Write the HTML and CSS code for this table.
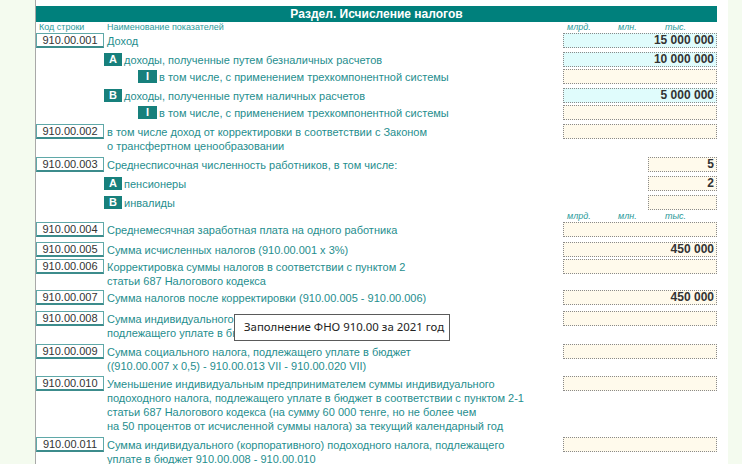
FILE: index.html
```html
<!DOCTYPE html>
<html lang="ru">
<head>
<meta charset="utf-8">
<title>Раздел. Исчисление налогов</title>
<link rel="stylesheet" href="styles.css">
</head>
<body>
<div class="page">
  <div class="title">Раздел. Исчисление налогов</div>
  <div class="colhead">
    <div class="ch-code">Код строки</div>
    <div class="ch-name">Наименование показателей</div>
    <div class="units"><span class="u1">млрд.</span><span class="u2">млн.</span><span>тыс.</span></div>
  </div>

  <div class="row first">
    <div class="code">910.00.001</div>
    <div class="label">Доход</div>
    <div class="field calc">15 000 000</div>
  </div>
  <div class="row">
    <div></div>
    <div class="label b"><span class="badge">A</span><span>доходы, полученные путем безналичных расчетов</span></div>
    <div class="field calc">10 000 000</div>
  </div>
  <div class="row sub">
    <div></div>
    <div class="label b"><span class="badge ind">I</span><span>в том числе, с применением трехкомпонентной системы</span></div>
    <div class="field"></div>
  </div>
  <div class="row">
    <div></div>
    <div class="label b"><span class="badge">B</span><span>доходы, полученные путем наличных расчетов</span></div>
    <div class="field calc">5 000 000</div>
  </div>
  <div class="row sub">
    <div></div>
    <div class="label b"><span class="badge ind">I</span><span>в том числе, с применением трехкомпонентной системы</span></div>
    <div class="field"></div>
  </div>
  <div class="row">
    <div class="code">910.00.002</div>
    <div class="label">в том числе доход от корректировки в соответствии с Законом<br>о трансфертном ценообразовании</div>
    <div class="field"></div>
  </div>
  <div class="row">
    <div class="code">910.00.003</div>
    <div class="label">Среднесписочная численность работников, в том числе:</div>
    <div class="field sm">5</div>
  </div>
  <div class="row">
    <div></div>
    <div class="label b"><span class="badge">A</span><span>пенсионеры</span></div>
    <div class="field sm">2</div>
  </div>
  <div class="row">
    <div></div>
    <div class="label b"><span class="badge">B</span><span>инвалиды</span></div>
    <div class="field sm"></div>
  </div>
  <div class="unitrow">
    <div></div>
    <div></div>
    <div class="units"><span class="u1">млрд.</span><span class="u2">млн.</span><span>тыс.</span></div>
  </div>
  <div class="row after-units">
    <div class="code">910.00.004</div>
    <div class="label">Среднемесячная заработная плата на одного работника</div>
    <div class="field"></div>
  </div>
  <div class="row loose">
    <div class="code">910.00.005</div>
    <div class="label">Сумма исчисленных налогов (910.00.001 x 3%)</div>
    <div class="field">450 000</div>
  </div>
  <div class="row tight">
    <div class="code">910.00.006</div>
    <div class="label">Корректировка суммы налогов в соответствии с пунктом 2<br>статьи 687 Налогового кодекса</div>
    <div class="field"></div>
  </div>
  <div class="row tight">
    <div class="code">910.00.007</div>
    <div class="label">Сумма налогов после корректировки (910.00.005 - 910.00.006)</div>
    <div class="field">450 000</div>
  </div>
  <div class="row wide">
    <div class="code">910.00.008</div>
    <div class="label">Сумма индивидуального (корпоративного) подоходного налога,<br>подлежащего уплате в бюджет (910.00.007 x 0,5)</div>
    <div class="field"></div>
  </div>
  <div class="row">
    <div class="code">910.00.009</div>
    <div class="label">Сумма социального налога, подлежащего уплате в бюджет<br>((910.00.007 x 0,5) - 910.00.013 VII - 910.00.020 VII)</div>
    <div class="field"></div>
  </div>
  <div class="row snug">
    <div class="code">910.00.010</div>
    <div class="label">Уменьшение индивидуальным предпринимателем суммы индивидуального<br>подоходного налога, подлежащего уплате в бюджет в соответствии с пунктом 2-1<br>статьи 687 Налогового кодекса (на сумму 60 000 тенге, но не более чем<br>на 50 процентов от исчисленной суммы налога) за текущий календарный год</div>
    <div class="field"></div>
  </div>
  <div class="row">
    <div class="code">910.00.011</div>
    <div class="label">Сумма индивидуального (корпоративного) подоходного налога, подлежащего<br>уплате в бюджет 910.00.008 - 910.00.010</div>
    <div class="field"></div>
  </div>
</div>
<div class="tooltip">Заполнение ФНО 910.00 за 2021 год</div>
</body>
</html>
```
FILE: styles.css
```css
html, body {
  margin: 0;
  height: 464px;
  overflow: hidden;
}
body {
  background: #f4fbef;
  font-family: "Liberation Sans", Arial, sans-serif;
  position: relative;
}
.page {
  margin-left: 35px;
  width: 693px;
  min-height: 464px;
  box-sizing: border-box;
  border-left: 1px solid #a8a8a8;
  background: #ffffff;
  padding: 6px 11px 0 0;
}
.title {
  height: 16px;
  background: #00807c;
  color: #ffffff;
  font-weight: bold;
  font-size: 12px;
  line-height: 16px;
  text-align: center;
}
.colhead, .row, .unitrow {
  display: grid;
  grid-template-columns: 68px 1fr 154px;
}
.colhead {
  height: 11px;
  font-size: 9px;
  line-height: 11px;
  color: #2b9a9a;
}
.ch-code { padding-left: 3px; }
.ch-name { padding-left: 3px; }
.units {
  display: flex;
  padding-left: 4px;
  font-size: 9px;
  font-style: italic;
  color: #2b9a9a;
}
.u1 { width: 51px; }
.u2 { width: 47px; }
.unitrow {
  height: 12px;
  line-height: 13px;
}
.row { margin-top: 4px; }
.row.first { margin-top: 0; }
.row.sub { margin-top: 2px; }
.row.after-units { margin-top: 0; }
.row.loose { margin-top: 5px; }
.row.tight { margin-top: 2px; }
.row.wide { margin-top: 6px; }
.row.snug { margin-top: 3px; }
.code {
  height: 15px;
  box-sizing: border-box;
  border: 1px solid #5fa8a8;
  border-bottom: 2px solid #3c8c8c;
  font-size: 11px;
  line-height: 12px;
  text-align: center;
  color: #333333;
}
.label {
  padding: 1px 0 0 3px;
  font-size: 11px;
  line-height: 14px;
  color: #1f8e8e;
}
.label.b {
  padding-left: 0;
  display: flex;
  align-items: flex-start;
}
.badge {
  flex: none;
  width: 18px;
  height: 13px;
  margin-right: 2px;
  background: #17807c;
  color: #ffffff;
  font-weight: bold;
  font-size: 11px;
  line-height: 13px;
  text-align: center;
}
.badge.ind {
  width: 19px;
  margin-left: 34px;
}
.field {
  height: 15px;
  box-sizing: border-box;
  border: 1px dotted #8a8a8a;
  background: #fffaec;
  padding-right: 2px;
  font-size: 12px;
  font-weight: bold;
  line-height: 13px;
  text-align: right;
  color: #333333;
}
.field.calc { background: #e0fcfc; }
.field.sm {
  width: 69px;
  justify-self: end;
}
.tooltip {
  position: absolute;
  left: 234px;
  top: 314px;
  width: 216px;
  height: 27px;
  box-sizing: border-box;
  border: 1px solid #5a5a5a;
  background: #ffffff;
  padding-left: 9px;
  font-family: "Noto Sans", "Open Sans", sans-serif;
  font-size: 11.4px;
  line-height: 24px;
  color: #222222;
  white-space: nowrap;
}
```
